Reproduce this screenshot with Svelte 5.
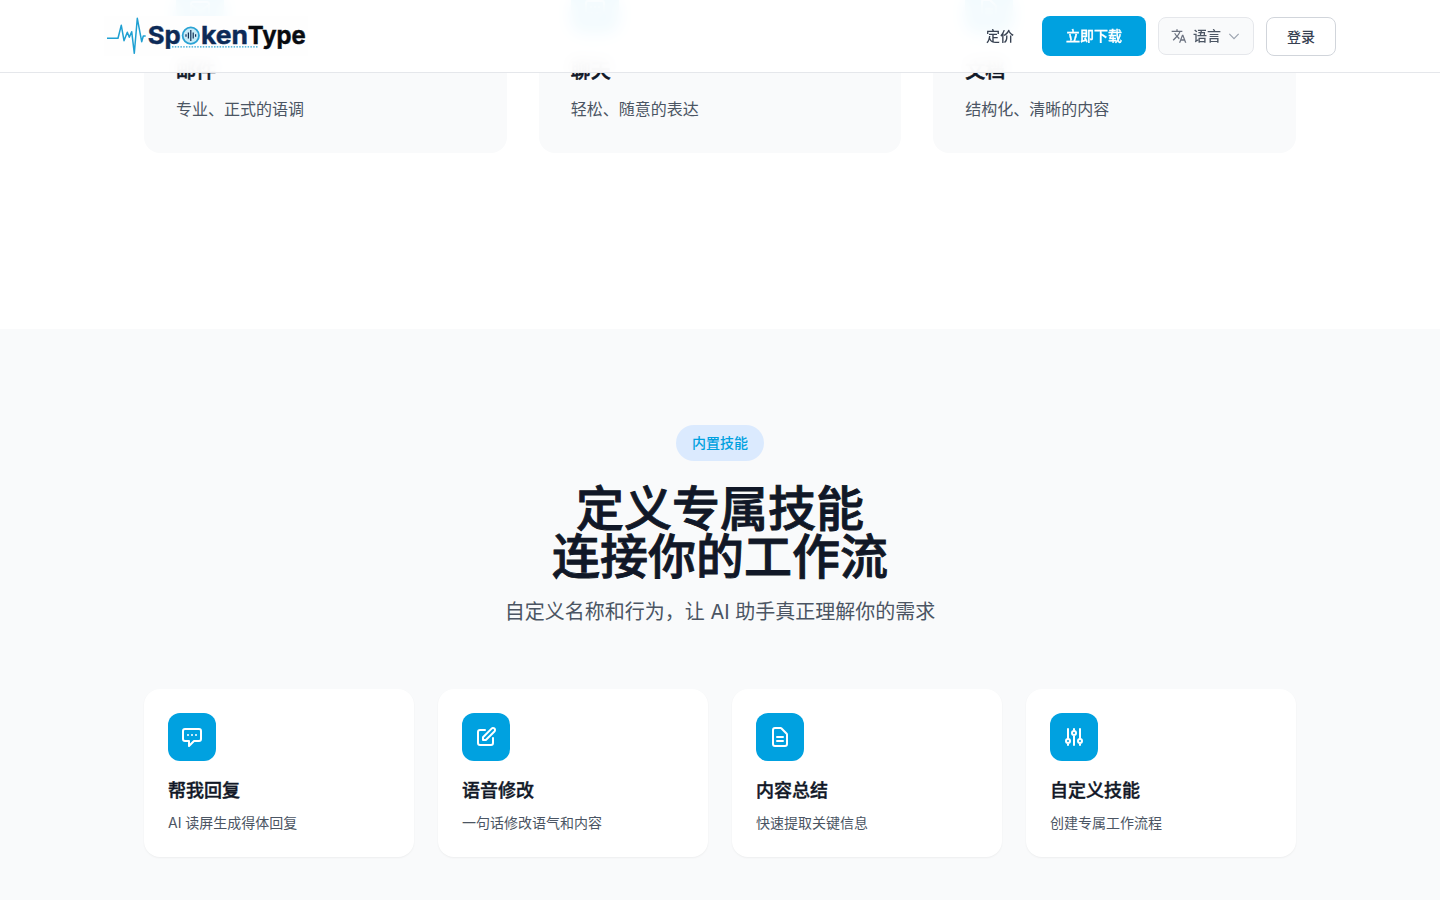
<!--
  Landing page: sticky header, tone cards and the built-in skills section.
-->
<script lang="ts">
	interface Card {
		title: string;
		desc: string;
		icon: string;
	}

	const tones: Card[] = [
		{
			title: '邮件',
			desc: '专业、正式的语调',
			icon: 'M3 8l7.89 5.26a2 2 0 002.22 0L21 8M5 19h14a2 2 0 002-2V7a2 2 0 00-2-2H5a2 2 0 00-2 2v10a2 2 0 002 2z'
		},
		{
			title: '聊天',
			desc: '轻松、随意的表达',
			icon: 'M8 10h.01M12 10h.01M16 10h.01M9 16H5a2 2 0 01-2-2V6a2 2 0 012-2h14a2 2 0 012 2v8a2 2 0 01-2 2h-5l-5 5v-5z'
		},
		{
			title: '文档',
			desc: '结构化、清晰的内容',
			icon: 'M9 12h6m-6 4h6m2 5H7a2 2 0 01-2-2V5a2 2 0 012-2h5.586a1 1 0 01.707.293l5.414 5.414a1 1 0 01.293.707V19a2 2 0 01-2 2z'
		}
	];

	const skills: Card[] = [
		{
			title: '帮我回复',
			desc: 'AI 读屏生成得体回复',
			icon: 'M8 10h.01M12 10h.01M16 10h.01M9 16H5a2 2 0 01-2-2V6a2 2 0 012-2h14a2 2 0 012 2v8a2 2 0 01-2 2h-5l-5 5v-5z'
		},
		{
			title: '语音修改',
			desc: '一句话修改语气和内容',
			icon: 'M11 5H6a2 2 0 00-2 2v11a2 2 0 002 2h11a2 2 0 002-2v-5m-1.414-9.414a2 2 0 112.828 2.828L11.828 15H9v-2.828l8.586-8.586z'
		},
		{
			title: '内容总结',
			desc: '快速提取关键信息',
			icon: 'M9 12h6m-6 4h6m2 5H7a2 2 0 01-2-2V5a2 2 0 012-2h5.586a1 1 0 01.707.293l5.414 5.414a1 1 0 01.293.707V19a2 2 0 01-2 2z'
		},
		{
			title: '自定义技能',
			desc: '创建专属工作流程',
			icon: 'M12 6V4m0 2a2 2 0 100 4m0-4a2 2 0 110 4m-6 8a2 2 0 100-4m0 4a2 2 0 110-4m0 4v2m0-6V4m6 6v10m6-2a2 2 0 100-4m0 4a2 2 0 110-4m0 4v2m0-6V4'
		}
	];
</script>

<div class="page">
	<header class="header">
		<div class="bar">
			<svg class="logo" width="204" height="40" viewBox="0 0 204 40" role="img" aria-label="SpokenType">
				<rect width="204" height="40" fill="#fefefe" />
				<path
					d="M3 22.3h11l3.300-13L20 24.700l3.300-8.400 2 5 2.400-5.600 2.600 21.600 3-35 4.400 23.400 1.600-5.700h2.400"
					fill="none"
					stroke="#1fa0d2"
					stroke-width="1.500"
					stroke-linejoin="round"
				/>
				<text class="word navy" x="43.800" y="27.600" textLength="33" lengthAdjust="spacingAndGlyphs">Sp</text>
				<circle cx="86.800" cy="19.600" r="8.200" fill="#c9ebf7" stroke="#2ba3d4" stroke-width="1.800" />
				<path d="M82 18.200v2.600M84.400 16.500v6M86.800 14v11M89.200 16.500v6M91.600 18.200v2.600" stroke="#123055" stroke-width="1.200" />
				<text class="word navy" x="97" y="27.600" textLength="47" lengthAdjust="spacingAndGlyphs">ken</text>
				<text class="word" x="143.800" y="27.600" textLength="58" lengthAdjust="spacingAndGlyphs">Type</text>
				<path d="M68 30.800h86" stroke="#2ba3d4" stroke-width="1.300" stroke-dasharray="1.500 1.300" />
			</svg>

			<nav class="nav">
				<a class="link" href="#pricing">定价</a>
				<a class="download" href="#download">立即下载</a>
				<button class="lang">
					<svg class="translate" width="16" height="16" viewBox="0 0 24 24" fill="currentColor">
						<path d="M12.870 15.070l-2.540-2.510.03-.03A17.520 17.520 0 0014.070 6H17V4h-7V2H8v2H1v1.990h11.170C11.500 7.920 10.440 9.750 9 11.350 8.070 10.320 7.300 9.190 6.690 8h-2c.73 1.630 1.730 3.170 2.980 4.560l-5.090 5.020L4 19l5-5 3.110 3.110.76-2.040zM18.500 10h-2L12 22h2l1.120-3h4.750L21 22h2l-4.500-12zm-2.620 7l1.620-4.330L19.120 17h-3.240z" />
					</svg>
					<span>语言</span>
					<svg class="chevron" width="14" height="14" viewBox="0 0 24 24" fill="none" stroke="currentColor" stroke-width="2">
						<path d="M4 8.500l8 8 8-8" />
					</svg>
				</button>
				<a class="login" href="#login">登录</a>
			</nav>
		</div>
	</header>

	<section class="tones">
		{#each tones as tone (tone.title)}
			<article class="tone">
				<div class="icon">
					<svg width="24" height="24" viewBox="0 0 24 24"><path d={tone.icon} /></svg>
				</div>
				<h3>{tone.title}</h3>
				<p>{tone.desc}</p>
			</article>
		{/each}
	</section>

	<section class="skills">
		<div class="intro">
			<span class="badge">内置技能</span>
			<h2>定义专属技能<br />连接你的工作流</h2>
			<p>自定义名称和行为，让 AI 助手真正理解你的需求</p>
		</div>
		<div class="grid">
			{#each skills as skill (skill.title)}
				<article class="skill">
					<div class="icon">
						<svg width="24" height="24" viewBox="0 0 24 24"><path d={skill.icon} /></svg>
					</div>
					<h3>{skill.title}</h3>
					<p>{skill.desc}</p>
				</article>
			{/each}
		</div>
	</section>
</div>

<style>
	:global(body) {
		margin: 0;
		overflow: hidden;
	}

	.page {
		height: 900px;
		overflow: hidden;
		background: #fff;
		color: #111827;
		font-family: Inter, 'Noto Sans CJK SC', sans-serif;
	}

	.page :is(h2, h3, p) {
		margin: 0;
	}

	.header {
		position: fixed;
		inset: 0 0 auto;
		z-index: 10;
		background: rgba(255, 255, 255, 0.95);
		backdrop-filter: blur(8px);
		border-bottom: 1px solid #e5e7eb;
	}

	.bar {
		display: flex;
		align-items: center;
		justify-content: space-between;
		height: 72px;
		margin: 0 104px;
	}

	.logo {
		display: block;
	}

	.word {
		font-family: Inter, sans-serif;
		font-size: 24.5px;
		font-weight: 700;
		fill: #080b10;
		stroke: #080b10;
		stroke-width: 0.4px;
	}

	.navy {
		fill: #0d2a57;
		stroke: #0d2a57;
	}

	.nav {
		display: flex;
		align-items: center;
		gap: 12px;
		font-size: 14px;
		line-height: 20px;
		font-weight: 500;
	}

	.nav a {
		text-decoration: none;
	}

	.link {
		margin-right: 16px;
		color: #374151;
	}

	.download {
		padding: 10px 24px;
		border-radius: 8px;
		background: #00a1e0;
		color: #fff;
		-webkit-text-stroke: 0.3px;
	}

	.lang {
		display: flex;
		align-items: center;
		gap: 6px;
		box-sizing: border-box;
		width: 96px;
		height: 38px;
		padding: 0 12px;
		border: 1px solid #e5e7eb;
		border-radius: 8px;
		background: #f9fafb;
		color: #4b5563;
		font: inherit;
	}

	.translate {
		color: #6b7280;
	}

	.chevron {
		color: #9ca3af;
	}

	.login {
		padding: 9px 20px 8px;
		margin-top: 1px;
		border: 1px solid #d1d5db;
		border-radius: 8px;
		background: #fff;
		color: #374151;
	}

	.tones {
		display: grid;
		grid-template-columns: repeat(3, 1fr);
		gap: 32px;
		margin: -47px 144px 176px;
	}

	.tone {
		padding: 32px;
		border-radius: 16px;
		background: #f9fafb;
	}

	.icon {
		display: flex;
		align-items: center;
		justify-content: center;
		width: 48px;
		height: 48px;
		border-radius: 12px;
		background: #00a1e0;
	}

	.icon path {
		fill: none;
		stroke: #fff;
		stroke-width: 2;
		stroke-linecap: round;
		stroke-linejoin: round;
	}

	.page .tone h3 {
		margin: 24px 0 12px;
		font-size: 20px;
		line-height: 28px;
		font-weight: 500;
		-webkit-text-stroke: 0.5px;
	}

	.tone p {
		font-size: 16px;
		line-height: 24px;
		color: #4b5563;
	}

	.skills {
		height: 475px;
		padding: 96px 144px 0;
		background: #f9fafb;
	}

	.intro {
		text-align: center;
	}

	.badge {
		display: inline-block;
		padding: 8px 16px;
		border-radius: 999px;
		background: #dbeafe;
		color: #00a1e0;
		font-size: 14px;
		line-height: 20px;
		font-weight: 500;
		vertical-align: top;
	}

	.page .intro h2 {
		margin: 24px 0 17px;
		font-size: 48px;
		line-height: 48px;
		font-weight: 500;
		-webkit-text-stroke: 0.9px;
	}

	.intro p {
		font-size: 20px;
		line-height: 28px;
		color: #4b5563;
	}

	.grid {
		display: grid;
		grid-template-columns: repeat(4, 1fr);
		gap: 24px;
		margin-top: 63px;
	}

	.skill {
		padding: 24px;
		border-radius: 16px;
		background: #fff;
		box-shadow: 0 1px 2px rgba(0, 0, 0, 0.05);
	}

	.page .skill h3 {
		margin: 16px 0 8px;
		font-size: 18px;
		line-height: 28px;
		font-weight: 500;
		-webkit-text-stroke: 0.4px;
	}

	.skill p {
		font-size: 14px;
		line-height: 20px;
		color: #4b5563;
	}
</style>
